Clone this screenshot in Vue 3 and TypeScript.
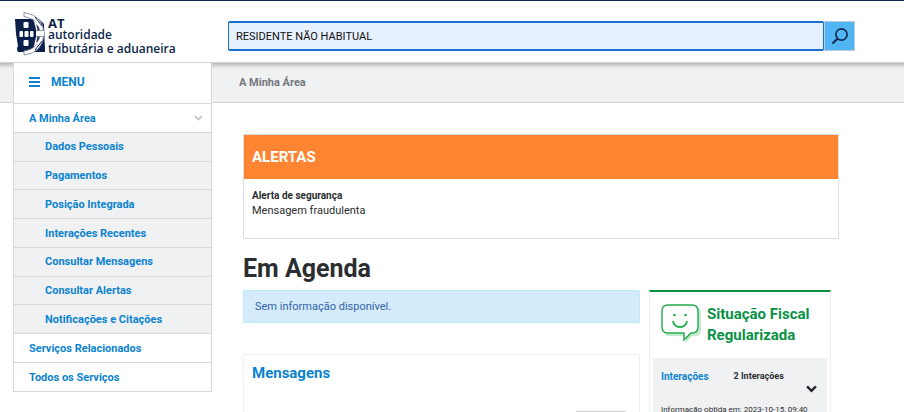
<script setup lang="ts">
import { ref } from 'vue'

interface Entry {
  label: string
  href: string
}

const query = ref<string>('RESIDENTE NÃO HABITUAL')
const areaOpen = ref<boolean>(true)
const detailsOpen = ref<boolean>(true)

const areaEntries: Entry[] = [
  { label: 'Dados Pessoais', href: '#dados' },
  { label: 'Pagamentos', href: '#pagamentos' },
  { label: 'Posição Integrada', href: '#posicao' },
  { label: 'Interações Recentes', href: '#interacoes' },
  { label: 'Consultar Mensagens', href: '#mensagens' },
  { label: 'Consultar Alertas', href: '#alertas' },
  { label: 'Notificações e Citações', href: '#notificacoes' },
]

const otherEntries: Entry[] = [
  { label: 'Serviços Relacionados', href: '#relacionados' },
  { label: 'Todos os Serviços', href: '#servicos' },
]
</script>

<template>
  <div class="page">
    <header class="header">
      <a class="brand" href="#inicio">
        <svg class="emblem" viewBox="0 0 32 44" aria-hidden="true">
          <path d="M0 7 H24 L29 12 L30 40 H3 Q1 37 3 34 L1 22 Z" fill="#0b1f4b" />
          <path d="M9 2.500 Q26 4 27 21.500 Q26 39 9 41" fill="none" stroke="#fff" stroke-width="4" />
          <path d="M9 0.500 Q28 3 29 21.500 Q28 41 9 43 M9 4.500 Q24 7 25 21.500 Q24 37 9 39 M9 0.500 V4.500 M9 39 V43" fill="none" stroke="#6d7890" stroke-width="0.8" />
          <path d="M29 31 L30 40 H22 Q27 37 29 31Z" fill="#0b1f4b" />
          <path d="M19 9 L25 15 M19 34 L25 28 M20 11 Q24 21 20 32" fill="none" stroke="#fff" stroke-width="1.4" />
          <path d="M20 5 L27 14 M20 38 L27 29" fill="none" stroke="#0b1f4b" stroke-width="1" />
          <g fill="#fff">
            <rect x="8.500" y="10" width="5" height="6" rx="1" />
            <rect x="4.500" y="19" width="3.500" height="6" rx="1" />
            <rect x="9.500" y="19" width="4" height="6" rx="1" />
            <rect x="15" y="19" width="3.500" height="6" rx="1" />
            <rect x="8.500" y="28" width="5" height="6" rx="1" />
            <rect x="21" y="18.500" width="8" height="6" />
          </g>
          <path d="M21 18.500 H29 M21 24.500 H29" stroke="#6d7890" stroke-width="0.8" />
        </svg>
        <span class="brand-text">
          <span class="brand-short">AT</span>
          <span>autoridade</span>
          <span>tributária e aduaneira</span>
        </span>
      </a>
      <form class="search" role="search" @submit.prevent>
        <input v-model="query" class="search-input" type="text" aria-label="Pesquisar" />
        <button class="search-button" type="submit" aria-label="Pesquisar">
          <svg viewBox="0 0 18 18" aria-hidden="true">
            <circle cx="10.5" cy="7.5" r="5.6" fill="none" stroke="#14264f" stroke-width="1.6" />
            <path d="M6.5 11.7 L1.5 16.500" stroke="#14264f" stroke-width="2" />
          </svg>
        </button>
      </form>
    </header>

    <div class="layout">
      <nav class="crumbs" aria-label="Localização">
        <a href="#area">A Minha Área</a>
      </nav>

      <nav class="sidebar" aria-label="Menu">
        <button class="menu-title" type="button">
          <svg viewBox="0 0 11 10" aria-hidden="true">
            <path d="M0 1 H11 M0 5 H11 M0 9 H11" stroke="#0c83cf" stroke-width="2" />
          </svg>
          MENU
        </button>
        <ul class="menu">
          <li>
            <button class="menu-row" type="button" :aria-expanded="areaOpen" @click="areaOpen = !areaOpen">
              A Minha Área
              <svg viewBox="0 0 9 6" aria-hidden="true">
                <path d="M1 1 L4.5 4.5 L8 1" fill="none" stroke="#bfc3c7" stroke-width="1.6" />
              </svg>
            </button>
            <ul v-if="areaOpen" class="submenu">
              <li v-for="entry in areaEntries" :key="entry.label">
                <a :href="entry.href">{{ entry.label }}</a>
              </li>
            </ul>
          </li>
          <li v-for="entry in otherEntries" :key="entry.label">
            <a class="menu-row" :href="entry.href">{{ entry.label }}</a>
          </li>
        </ul>
      </nav>

      <main class="main">
        <section class="alerts">
          <h2>ALERTAS</h2>
          <div class="alerts-body">
            <strong>Alerta de segurança</strong>
            <p>Mensagem fraudulenta</p>
          </div>
        </section>

        <h1>Em Agenda</h1>

        <div class="columns">
          <div class="left">
            <p class="notice">Sem informação disponível.</p>
            <section class="messages">
              <h2>Mensagens</h2>
              <button class="more" type="button" aria-label="Mensagens"></button>
            </section>
          </div>

          <aside class="status">
            <div class="status-head">
              <svg viewBox="0 0 40 40" aria-hidden="true">
                <path d="M8 3 H34 Q40 3 40 9 V26 Q40 32 34 32 H31 L25 39 V32 H8 Q3 32 3 27Z" fill="#c5e8cf" />
                <path d="M7 1 H31 Q37 1 37 7 V23 Q37 29 31 29 H30 L23 36 V29 H7 Q1 29 1 23 V7 Q1 1 7 1Z" fill="#fff" stroke="#22ad4b" stroke-width="1.4" />
                <path d="M12 17 Q13 23 19 23 Q25 23 26 17" fill="none" stroke="#22ad4b" stroke-width="1.8" />
                <circle cx="13.5" cy="11" r="1.3" fill="#22ad4b" />
                <circle cx="24.5" cy="11" r="1.3" fill="#22ad4b" />
              </svg>
              <h2>Situação Fiscal Regularizada</h2>
            </div>
            <div class="status-body">
              <div class="status-row">
                <h3>Interações</h3>
                <span class="count">2 Interações</span>
              </div>
              <button class="toggle" type="button" aria-label="Detalhes" :aria-expanded="detailsOpen" @click="detailsOpen = !detailsOpen">
                <svg viewBox="0 0 10 7" aria-hidden="true">
                  <path d="M1 1.2 L5 5.2 L9 1.2" fill="none" stroke="#212529" stroke-width="2.2" />
                </svg>
              </button>
              <p v-if="detailsOpen" class="stamp">Informação obtida em: 2023-10-15, 09:40</p>
            </div>
          </aside>
        </div>
      </main>
    </div>
  </div>
</template>

<style>
html,
body {
  height: 100%;
  margin: 0;
  overflow: hidden;
  background: #fff;
}
</style>

<style scoped>
.page {
  font-family: Roboto, "Liberation Sans", sans-serif;
  font-size: 11px;
  line-height: 15px;
  color: #2b2e31;
}
h1, h2, h3, p, ul {
  margin: 0;
  padding: 0;
}
ul {
  list-style: none;
}
a {
  color: inherit;
  text-decoration: none;
}
button {
  font: inherit;
  color: inherit;
  background: none;
  border: 0;
  padding: 0;
  cursor: pointer;
}
svg {
  display: block;
  flex: none;
}

.header {
  display: flex;
  align-items: flex-start;
  box-sizing: border-box;
  min-height: 63px;
  padding: 0 49px 0 15px;
  border-top: 1px solid #14264f;
  border-bottom: 1px solid #d3d6d6;
}
.brand {
  display: flex;
  gap: 1px;
  width: 213px;
  padding-top: 11px;
  color: #0b1f4b;
}
.emblem {
  width: 32px;
  height: 44px;
}
.brand-text {
  display: flex;
  flex-direction: column;
  padding-top: 6px;
  font: 600 12px/14px "Open Sans", "Noto Sans", sans-serif;
  white-space: nowrap;
}
.brand-short {
  font-size: 13px;
  line-height: 10px;
  font-weight: 700;
}
.search {
  display: flex;
  flex: 1;
  padding-top: 20px;
}
.search-input {
  flex: 1;
  min-width: 0;
  box-sizing: border-box;
  height: 30px;
  padding: 0 7px;
  font: inherit;
  color: #111;
  background: #e7f0fe;
  border: 1px solid #1b6fd0;
  border-top-width: 2px;
  border-bottom-width: 2px;
  border-radius: 2px;
  outline: 0;
}
.search-button {
  display: grid;
  place-items: center;
  box-sizing: border-box;
  width: 31px;
  height: 30px;
  background: #51b4f3;
  border: 1px solid #b9cfdf;
}
.search-button svg {
  width: 18px;
  height: 18px;
}

.layout {
  display: grid;
  grid-template-columns: 13px 199px minmax(0, 1fr);
  grid-template-rows: 40px auto;
}
.crumbs {
  grid-area: 1 / 1 / 2 / 4;
  box-sizing: border-box;
  padding: 12px 0 0 239px;
  font-weight: 700;
  color: #74797e;
  background: linear-gradient(#b5b8b9, #d9dbdc 3px, #f0f1f3 6px);
  border-bottom: 1px solid #cfd3d4;
}
.sidebar {
  grid-area: 1 / 2 / 3 / 3;
  align-self: start;
  color: #0c83cf;
  font-weight: 700;
  background: #fff;
  border: 1px solid #d6d8da;
  border-top: 0;
}
.menu-title {
  display: flex;
  align-items: center;
  gap: 11px;
  width: 100%;
  height: 41px;
  padding: 0 15px 2px;
  font-size: 12px;
  border-bottom: 1px solid #d6d8da;
}
.menu-title svg {
  width: 11px;
  height: 10px;
}
.menu-row {
  display: flex;
  align-items: center;
  justify-content: space-between;
  box-sizing: border-box;
  width: 100%;
  height: 28px;
  padding: 0 8px 0 15px;
}
.menu-row svg {
  width: 9px;
  height: 6px;
}
.menu > li + li {
  border-top: 1px solid #d6d8da;
}
.submenu {
  display: flex;
  flex-direction: column;
  min-height: 201px;
  background: #f0f1f3;
}
.submenu li {
  display: flex;
  flex: 1;
  align-items: center;
  padding-left: 31px;
  border-top: 1px solid #d6d8da;
}

.main {
  grid-area: 2 / 3 / 3 / 4;
  padding: 31px 65px 0 31px;
}
.alerts {
  border: 1px solid #dcdfdf;
}
.alerts h2 {
  padding: 12px 8px;
  font-size: 15px;
  line-height: 20px;
  color: #fff;
  background: #ff8533;
}
.alerts-body {
  padding: 9px 8px 20px;
}
.alerts-body strong {
  display: block;
  font-size: 10px;
}
h1 {
  padding-top: 13px;
  font-size: 25px;
  line-height: 34px;
}
.columns {
  display: grid;
  grid-template-columns: minmax(0, 1fr) 182px;
  gap: 9px;
  align-items: start;
  padding: 4px 8px 0 0;
}
.notice {
  padding: 8px 11px;
  color: #3464a5;
  background: #d3ebfa;
  border: 1px solid #bdeafa;
  border-radius: 1px;
}
.messages {
  display: flex;
  flex-direction: column;
  margin-top: 31px;
  padding: 8px 13px 8px 8px;
  border: 1px solid #eeefef;
}
.messages h2 {
  font-size: 15px;
  line-height: 20px;
  color: #0c83cf;
}
.more {
  align-self: flex-end;
  width: 50px;
  height: 24px;
  margin-top: 28px;
  background: #f0f1f3;
  border: 1px solid #cfd3d4;
}
.status {
  border: 1px solid #eeefef;
  border-top: 2px solid #099246;
}
.status-head {
  display: flex;
  gap: 6px;
  padding: 12px 12px 12px 11px;
}
.status-head svg {
  width: 40px;
  height: 40px;
}
.status-head h2 {
  font-size: 15px;
  line-height: 21px;
  color: #099246;
}
.status-body {
  margin: 0 3px 4px;
  padding: 11px 8px 8px;
  background: #f0f1f3;
}
.status-row {
  display: flex;
  gap: 25px;
}
.status h3 {
  font-size: 10px;
  line-height: 16px;
  color: #0c83cf;
}
.count {
  font-size: 9px;
  font-weight: 700;
  line-height: 14px;
}
.toggle {
  display: block;
  margin: 0 2px 0 auto;
}
.toggle svg {
  width: 11px;
  height: 8px;
}
.stamp {
  padding-top: 10px;
  font-size: 8px;
  line-height: 14px;
  white-space: nowrap;
}
</style>
